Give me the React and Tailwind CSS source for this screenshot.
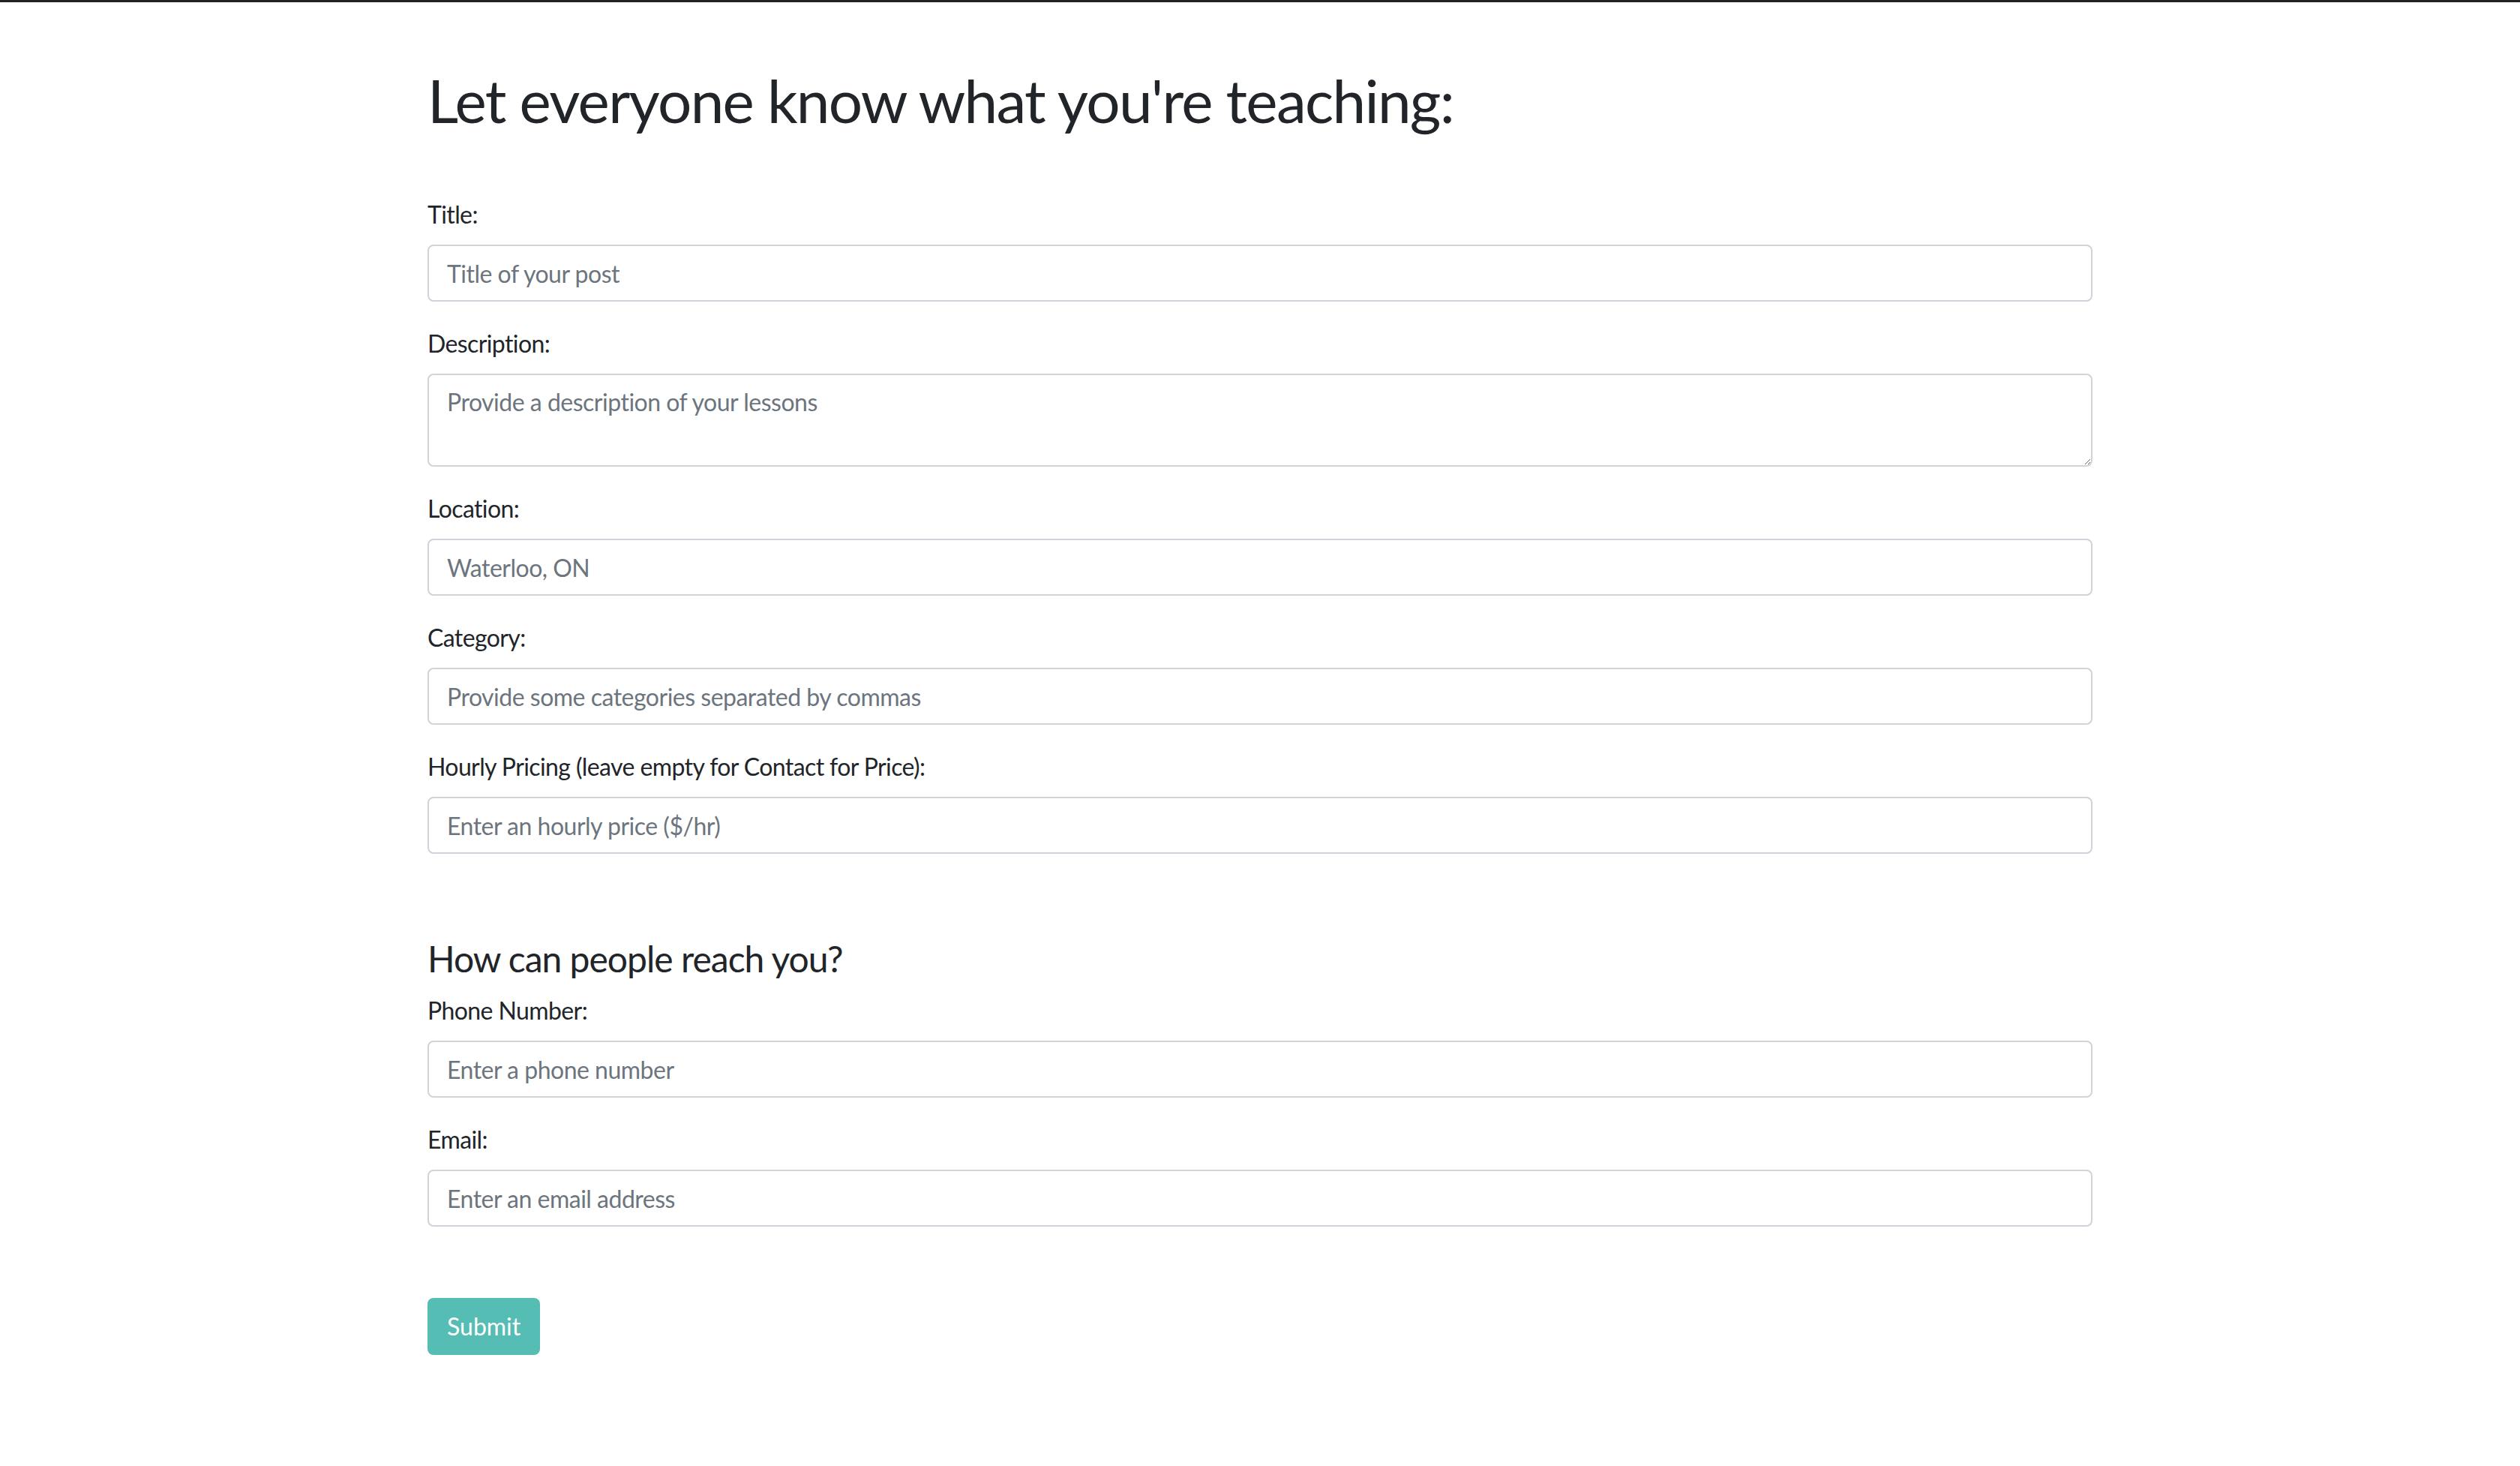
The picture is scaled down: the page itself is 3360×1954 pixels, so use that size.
import React from 'react';

const fields = [
  { label: 'Title:', placeholder: 'Title of your post' },
  { label: 'Description:', placeholder: 'Provide a description of your lessons', multiline: true },
  { label: 'Location:', placeholder: 'Waterloo, ON' },
  { label: 'Category:', placeholder: 'Provide some categories separated by commas' },
  { label: 'Hourly Pricing (leave empty for Contact for Price):', placeholder: 'Enter an hourly price ($/hr)' },
];

const contactFields = [
  { label: 'Phone Number:', placeholder: 'Enter a phone number' },
  { label: 'Email:', placeholder: 'Enter an email address' },
];

const inputClass =
  'w-full border-2 border-[#ced4da] rounded-[8px] px-[24px] text-[32px] tracking-[-0.5px] text-[#495057] bg-white placeholder:text-[#6c757d] outline-none';

const FormGroup = ({ label, placeholder, multiline }) => (
  <div className="mb-[32px]">
    <label className="block text-[32px] leading-[48px] tracking-[-0.6px] mb-[16px]">{label}</label>
    {multiline ? (
      <textarea rows={2} placeholder={placeholder} className={`${inputClass} h-[124px] py-[12px] leading-[48px] block`} />
    ) : (
      <input type="text" placeholder={placeholder} className={`${inputClass} h-[76px] block`} />
    )}
  </div>
);

export default function App() {
  return (
    <div className="min-h-screen bg-white border-t-[3px] border-[#222222] font-[Lato,sans-serif] text-[#212529]">
      <div className="w-[2280px] mx-auto px-[30px] pt-[82px] pb-[120px]">
        <h1 className="text-[80px] leading-[96px] tracking-[-1.7px] font-normal mb-[81px]">
          Let everyone know what you're teaching:
        </h1>

        <form onSubmit={(e) => e.preventDefault()}>
          {fields.map((f) => (
            <FormGroup key={f.label} {...f} />
          ))}

          <h4 className="text-[48px] leading-[58px] tracking-[-1px] font-normal mt-[111px] mb-[16px]">
            How can people reach you?
          </h4>
          {contactFields.map((f) => (
            <FormGroup key={f.label} {...f} />
          ))}

          <button
            type="submit"
            className="mt-[63px] h-[76px] px-[26px] rounded-[8px] bg-[#55bdb3] text-white text-[32px]"
          >
            Submit
          </button>
        </form>
      </div>
    </div>
  );
}
